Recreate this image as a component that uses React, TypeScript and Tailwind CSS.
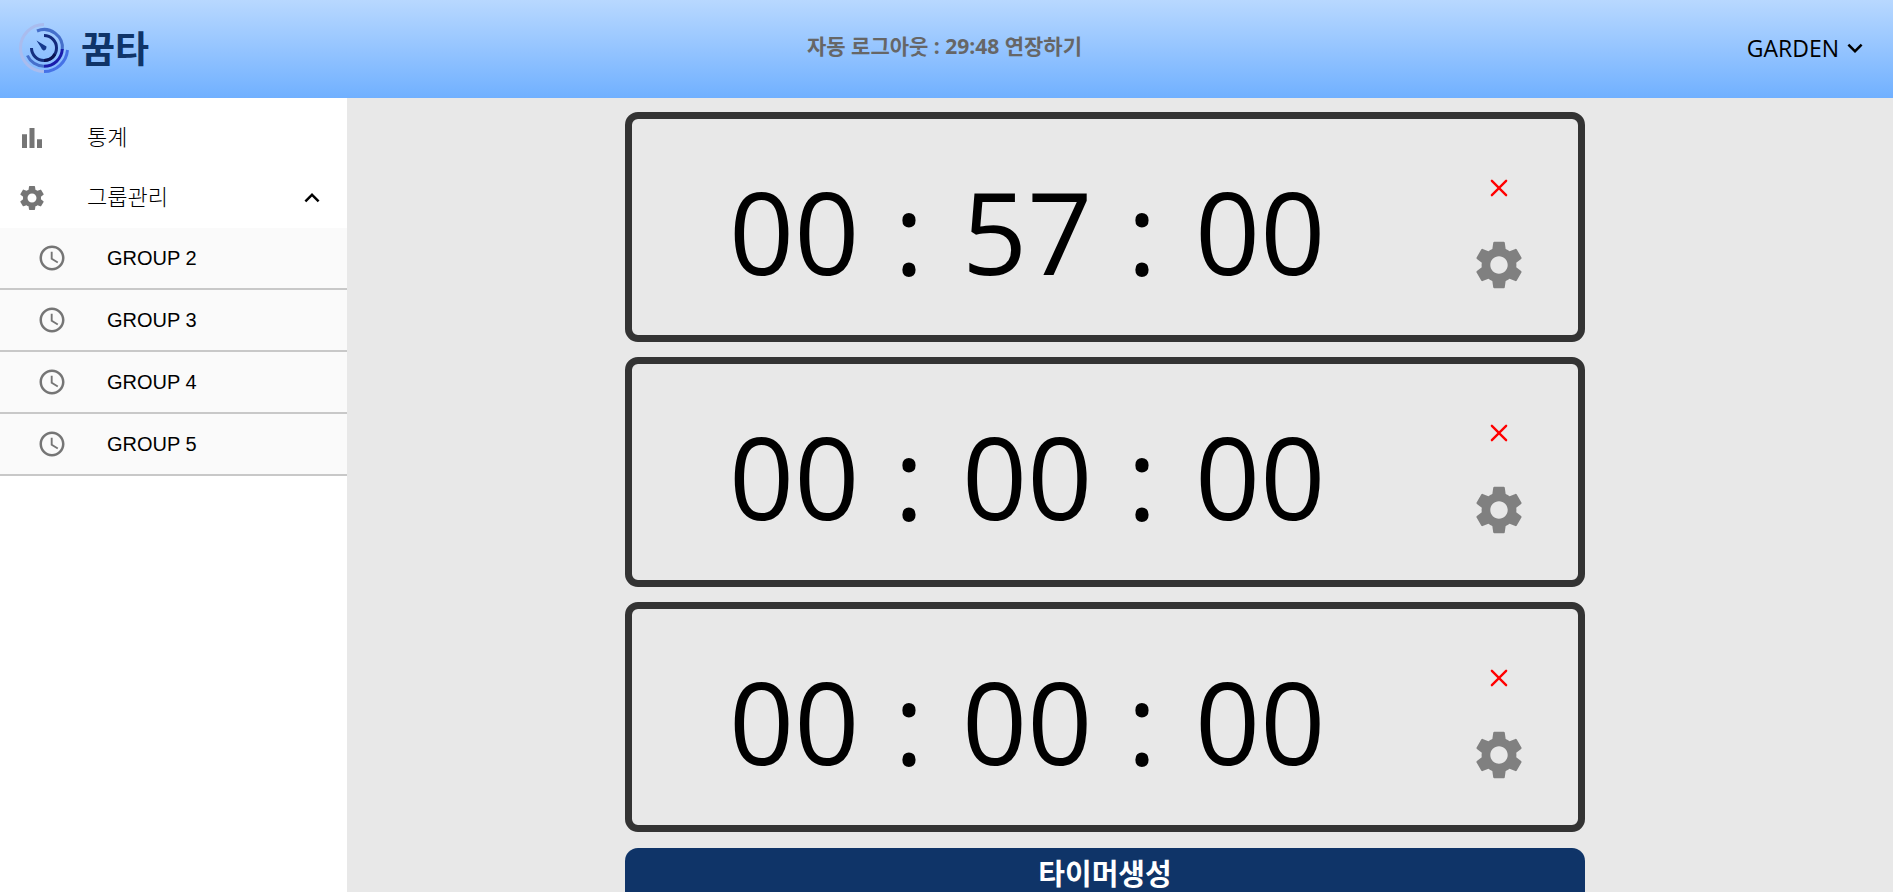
import { useState } from "react";
import { BsX } from "react-icons/bs";
import {
  MdAccessTime,
  MdBarChart,
  MdExpandLess,
  MdExpandMore,
  MdSettings,
} from "react-icons/md";

const groups = ["GROUP 2", "GROUP 3", "GROUP 4", "GROUP 5"];

const initialTimers = [
  { id: 1, hours: "00", minutes: "57", seconds: "00" },
  { id: 2, hours: "00", minutes: "00", seconds: "00" },
  { id: 3, hours: "00", minutes: "00", seconds: "00" },
];

type Timer = (typeof initialTimers)[number];

function Logo() {
  return (
    <svg viewBox="0 0 50 50" className="size-[50px]" fill="none" aria-hidden="true">
      <path d="M25 1.5A23.5 23.5 0 0 0 25 48.5" stroke="#a9bcee" strokeWidth="3" />
      <path d="M48.5 27A23.5 23.5 0 0 1 25 48.5" stroke="#4672e6" strokeWidth="3" />
      <path d="M18 8A18.3 18.3 0 0 1 43.3 27" stroke="#456fcb" strokeWidth="3" />
      <path d="M43.3 26A18.3 18.3 0 0 1 25 43.3" stroke="#1a1cab" strokeWidth="3" />
      <path d="M25 43.3A18.3 18.3 0 0 1 8.4 32.5" stroke="#456fcb" strokeWidth="3" />
      <path d="M25 12.5A12.5 12.5 0 0 1 25 37.5" stroke="#142a7c" strokeWidth="3" />
      <path d="M36 31A12.5 12.5 0 0 1 25 37.5" stroke="#0b1452" strokeWidth="3" />
      <path d="M25 37.5A12.5 12.5 0 0 1 12.5 25" stroke="#15307f" strokeWidth="3" />
      <path d="M17.5 17.5L27.5 23.5Q27.5 27.5 24.5 27.5Q22.5 26.5 22 24.5Z" fill="#16398c" />
    </svg>
  );
}

function TimerCard({ timer, onRemove }: { timer: Timer; onRemove: () => void }) {
  return (
    <li className="flex h-[230px] items-center justify-between rounded-[13px] border-[7px] border-[#333333] pt-2 pr-[50px] pl-[97px]">
      <div className="flex items-center text-center font-['Open_Sans','Noto_Sans_CJK_KR',sans-serif] text-[114px] leading-none">
        <span className="w-[127px]">{timer.hours}</span>
        <span className="w-[106px]">:</span>
        <span className="w-[127px]">{timer.minutes}</span>
        <span className="w-[106px]">:</span>
        <span className="w-[127px]">{timer.seconds}</span>
      </div>
      <div className="flex flex-col items-center gap-[29px]">
        <button type="button" aria-label="삭제" onClick={onRemove} className="text-[#ff0000]">
          <BsX className="size-[38px]" />
        </button>
        <button type="button" aria-label="설정" className="text-[#808080]">
          <MdSettings className="size-[58px]" />
        </button>
      </div>
    </li>
  );
}

export default function App() {
  const [open, setOpen] = useState(true);
  const [timers, setTimers] = useState(initialTimers);

  return (
    <div className="flex h-screen flex-col overflow-hidden bg-[#e8e8e8] font-['Open_Sans','Noto_Sans_CJK_KR',sans-serif] text-black">
      <header className="grid h-[98px] shrink-0 grid-cols-3 items-center bg-linear-to-b from-[#b8d8ff] to-[#70b0ff] pr-[23px] pb-0.5 pl-[19px]">
        <a href="#" className="flex items-center gap-3 justify-self-start">
          <Logo />
          <span className="text-[37px] leading-none font-bold text-[#0f3468]">꿈타</span>
        </a>
        <p className="justify-self-center pb-1 text-[21px] leading-none font-bold text-[#666666]">
          자동 로그아웃 : 29:48 <button type="button">연장하기</button>
        </p>
        <button type="button" className="flex items-center gap-px justify-self-end text-[23px] leading-none">
          GARDEN
          <MdExpandMore className="size-[30px]" />
        </button>
      </header>

      <div className="flex min-h-0 grow">
        <nav className="w-[347px] shrink-0 bg-white pt-[10px] text-[22px]">
          <a href="#" className="flex h-[60px] items-center gap-10 px-[17px] font-light">
            <MdBarChart className="size-[30px] text-[#757575]" />
            <span className="pb-1">통계</span>
          </a>
          <button
            type="button"
            aria-expanded={open}
            onClick={() => setOpen(!open)}
            className="flex h-[60px] w-full items-center gap-10 pr-5 pl-[17px] text-left font-light"
          >
            <MdSettings className="size-[30px] text-[#757575]" />
            <span className="grow pb-1">그룹관리</span>
            {open ? <MdExpandLess className="size-[30px]" /> : <MdExpandMore className="size-[30px]" />}
          </button>
          {open && (
            <ul className="font-['Liberation_Sans',sans-serif] text-[20px]">
              {groups.map((group) => (
                <li key={group} className="border-b-2 border-[#c8c8c8] bg-[#fafafa]">
                  <a href="#" className="flex h-[60px] items-center gap-10 px-[37px]">
                    <MdAccessTime className="size-[30px] text-[#757575]" />
                    {group}
                  </a>
                </li>
              ))}
            </ul>
          )}
        </nav>

        <main className="grow overflow-hidden pt-[14px] pr-[30px]">
          <div className="mx-auto flex max-w-[960px] flex-col gap-4">
            <ul className="flex flex-col gap-[15px]">
              {timers.map((timer) => (
                <TimerCard
                  key={timer.id}
                  timer={timer}
                  onRemove={() => setTimers(timers.filter((t) => t.id !== timer.id))}
                />
              ))}
            </ul>
            <button
              type="button"
              className="h-[51px] rounded-t-[13px] bg-[#0f3468] text-[29px] leading-none font-bold text-white"
            >
              타이머생성
            </button>
          </div>
        </main>
      </div>
    </div>
  );
}
